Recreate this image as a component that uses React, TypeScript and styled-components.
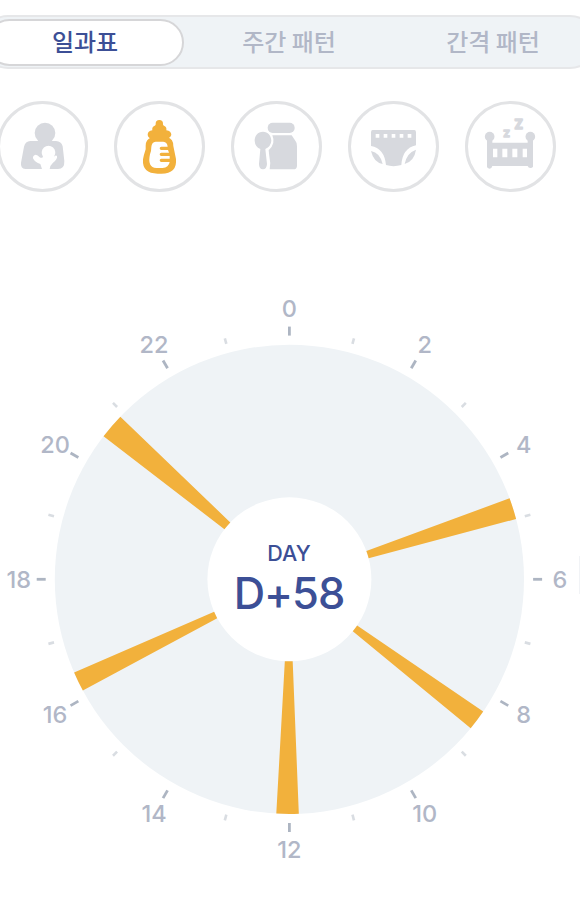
import React from "react";
import styled, { createGlobalStyle } from "styled-components";

const GlobalStyle = createGlobalStyle`
  * { box-sizing: border-box; }
  body { margin: 0; background: #fff; }
`;

const Page = styled.main`
  width: 580px;
  height: 906px;
  overflow: hidden;
  display: flex;
  flex-direction: column;
  background: #fff;
  font-family: Inter, "Noto Sans CJK KR", sans-serif;
`;

const TabBar = styled.nav`
  display: grid;
  grid-template-columns: repeat(3, 204px);
  flex: none;
  height: 54px;
  margin: 15px -17px 0 -19px;
  border: 2px solid #e6e7e9;
  border-radius: 27px;
  background: #eff3f6;
`;

const Tab = styled.button<{ $active?: boolean }>`
  height: 47px;
  margin: 2px 3px 0;
  padding: 0 0 4px;
  border: 2px solid ${(p) => (p.$active ? "#d6d6d8" : "transparent")};
  border-radius: 24px;
  background: ${(p) => (p.$active ? "#fff" : "transparent")};
  color: ${(p) => (p.$active ? "#3c4f96" : "#b1b7c7")};
  font: 500 24px/39px "Noto Sans CJK KR", sans-serif;
`;

const Filters = styled.div`
  display: flex;
  flex: none;
  gap: 26px;
  margin: 32px 0 0 -3px;
`;

const FilterButton = styled.button<{ $active?: boolean }>`
  flex: none;
  width: 91px;
  height: 91px;
  padding: 0;
  border: 3px solid #e2e3e5;
  border-radius: 50%;
  background: #fff;
  color: ${(p) => (p.$active ? "#f2b13c" : "#d7d9de")};
`;

const Icon = styled.svg`
  display: block;
  width: 85px;
  height: 85px;
  fill: currentColor;
`;

const IconLetter = styled.text`
  font-family: Inter, sans-serif;
  font-weight: 700;
  stroke: currentColor;
  stroke-width: 5;
  stroke-linejoin: round;
`;

const ClockRow = styled.section`
  display: flex;
  align-items: center;
  flex: none;
  margin-top: 96px;
  height: 582px;
`;

const Clock = styled.svg`
  flex: none;
  display: block;
  width: 579px;
  height: 582px;
`;

const HourLabel = styled.text`
  fill: #b1b7c7;
  font-size: 23.5px;
  font-weight: 450;
  text-anchor: middle;
`;

const DayCaption = styled.text`
  fill: #3c4f96;
  font-size: 21.5px;
  font-weight: 450;
  text-anchor: middle;
`;

const DayValue = styled(DayCaption)`
  font-size: 43.5px;
  font-weight: 500;
  letter-spacing: -1px;
`;

const NextCard = styled.div`
  flex: none;
  width: 20px;
  height: 38px;
  margin-bottom: 8px;
  background: #f1f3f6;
`;

const NursingIcon = () => (
  <Icon viewBox="0 27 255 255">
    <circle cx="135" cy="114" r="31" />
    <path d="M91 138H168Q184 139 188 154L193 198Q194 222 174 222H149Q150 211 159 203Q173 193 171 184Q169 179 162 185A20.5 20.5 0 1 0 129 185Q126 191 119 187Q113 179 107 179Q98 181 99 190Q105 203 121 207L126 222H76Q61 220 63 203L72 155Q76 139 91 138Z" />
  </Icon>
);

const BottleIcon = () => (
  <Icon viewBox="21 27 255 255">
    <path d="M137 86A11 11 0 0 1 159 86Q158 91 162 92Q171 95 169 106Q184 108 184 120Q182 128 173 131H124Q114 128 113 119Q113 108 127 106Q125 95 134 92Q138 90 137 86Z" />
    <path fillRule="evenodd" d="M124 127H173Q190 132 190 153L198 192Q202 236 154 236H143Q96 236 99 193Q101 181 107 163V152Q107 134 124 127ZM137 140Q125 141 124 156Q124 169 120 178Q111 218 139 219H158Q176 218 179 201H154A5 5 0 0 1 154 191H179V183H154A5 5 0 0 1 154 173H177L174 165H154A5 5 0 0 1 154 155H173Q172 141 160 140Z" />
  </Icon>
);

const FoodIcon = () => (
  <Icon viewBox="42 27 255 255">
    <rect x="143" y="83" width="81" height="31" rx="15" />
    <path d="M157 121H215L226 137Q231 142 231 154V212Q231 223 220 223H149Q153 204 148 184L146 166Q168 146 157 121Z" />
    <path d="M129 110C113 110 104 122 104 137Q105 155 121 162L117 207Q117 223 129 223Q140 223 141 207L136 162Q153 154 154 137C153 121 144 110 129 110Z" />
  </Icon>
);

const DiaperIcon = () => (
  <Icon viewBox="33 27 255 255">
    <path fillRule="evenodd" d="M98 105H223Q228 105 228 112V151Q187 160 184 210Q160 217 138 210Q133 160 93 153V112Q93 105 98 105ZM107 117V128H118V117ZM131 117V128H142V117ZM155 117V128H166V117ZM179 117V128H190V117ZM203 117V128H214V117Z" />
    <path d="M93 168Q120 173 128 207Q101 202 93 168ZM228 164Q200 174 194 207Q223 198 228 164Z" />
  </Icon>
);

const CribIcon = () => (
  <Icon viewBox="39 27 255 255">
    <circle cx="104" cy="125" r="14.5" />
    <circle cx="226" cy="125" r="14.5" />
    <path fillRule="evenodd" d="M96 130H112V143H218V130H234V215Q232 219 226 219Q220 219 218 213H112Q110 221 104 221Q96 219 96 215ZM114 161V187H127V161ZM142 161V187H157V161ZM172 161V187H187V161ZM203 161V187H216V161Z" />
    <IconLetter x="145.5" y="127" fontSize="28">Z</IconLetter>
    <IconLetter x="178.5" y="102" fontSize="38">Z</IconLetter>
  </Icon>
);

const filters = [
  { name: "수유", Glyph: NursingIcon },
  { name: "젖병", Glyph: BottleIcon, active: true },
  { name: "이유식", Glyph: FoodIcon },
  { name: "기저귀", Glyph: DiaperIcon },
  { name: "수면", Glyph: CribIcon },
];

const CX = 289.4;
const CY = 291.3;
const OUTER = 234.6;
const INNER = 82;

const at = (deg: number, r: number): [number, number] => {
  const a = (deg * Math.PI) / 180;
  return [CX + r * Math.sin(a), CY - r * Math.cos(a)];
};

const feedings: [number, number][] = [
  [69.8, 75.1],
  [124.3, 129.4],
  [177.7, 183.2],
  [241.7, 246.6],
  [307.6, 313.9],
];

const wedge = ([from, to]: [number, number]) =>
  `M${at(from, INNER)}L${at(from, OUTER)}A${OUTER} ${OUTER} 0 0 1 ${at(to, OUTER)}L${at(to, INNER)}A${INNER} ${INNER} 0 0 0 ${at(from, INNER)}Z`;

const hours = Array.from({ length: 24 }, (_, h) => h);

export default function App() {
  return (
    <Page>
      <GlobalStyle />
      <TabBar>
        <Tab $active>일과표</Tab>
        <Tab>주간 패턴</Tab>
        <Tab>간격 패턴</Tab>
      </TabBar>
      <Filters>
        {filters.map(({ name, Glyph, active }) => (
          <FilterButton key={name} $active={active}>
            <Glyph />
          </FilterButton>
        ))}
      </Filters>
      <ClockRow>
        <Clock viewBox="0 0 579 582">
          <circle cx={CX} cy={CY} r={OUTER} fill="#eff3f6" />
          <circle cx={CX} cy={CY} r={INNER} fill="#fff" />
          {feedings.map((f) => (
            <path key={f[0]} d={wedge(f)} fill="#f2b13c" />
          ))}
          {hours.map((h) => {
            const major = h % 2 === 0;
            const [x1, y1] = at(h * 15, 243.7);
            const [x2, y2] = at(h * 15, major ? 252.7 : 249.5);
            return (
              <line
                key={h}
                x1={x1}
                y1={y1}
                x2={x2}
                y2={y2}
                stroke={major ? "#adb5c2" : "#d9dde2"}
                strokeWidth={major ? 2.8 : 2.6}
              />
            );
          })}
          {hours
            .filter((h) => h % 2 === 0)
            .map((h) => {
              const [x, y] = at(h * 15, 270.6);
              return (
                <HourLabel key={h} x={x} y={y + 8.5}>
                  {h}
                </HourLabel>
              );
            })}
          <DayCaption x="289" y="273">DAY</DayCaption>
          <DayValue x="289" y="320.6">D+58</DayValue>
        </Clock>
        <NextCard />
      </ClockRow>
    </Page>
  );
}
